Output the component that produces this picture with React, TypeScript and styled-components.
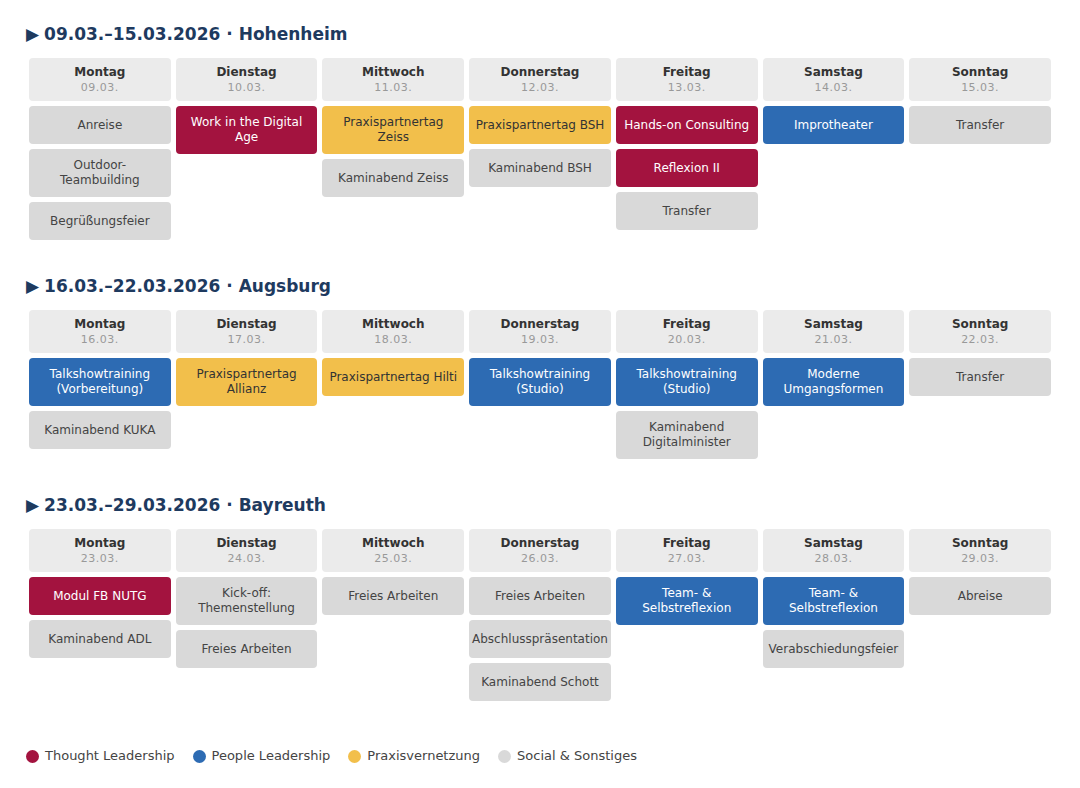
import React from "react";
import styled, { createGlobalStyle } from "styled-components";

type Kind = "thought" | "people" | "praxis" | "social";

const COLORS: Record<Kind, { bg: string; fg: string }> = {
  thought: { bg: "#a3133f", fg: "#ffffff" },
  people: { bg: "#2d6bb3", fg: "#ffffff" },
  praxis: { bg: "#f2bf4b", fg: "#333333" },
  social: { bg: "#d9d9d9", fg: "#444444" },
};

const GlobalStyle = createGlobalStyle`
  html, body { margin: 0; padding: 0; background: #ffffff; }
  body { font-family: "DejaVu Sans", "Liberation Sans", sans-serif; }
  * { box-sizing: border-box; }
`;

const Page = styled.div`
  padding: 23px 26px 20px;
  display: flex;
  flex-direction: column;
`;

const Section = styled.section`
  display: flex;
  flex-direction: column;
  margin-bottom: 32px;
`;

const Heading = styled.h2`
  margin: 0 0 10px;
  font-size: 17px;
  line-height: 22px;
  font-weight: bold;
  color: #1e3a5f;
  display: flex;
  align-items: center;
`;

const Arrow = styled.span`
  font-size: 17px;
  margin-right: 5px;
`;

const Week = styled.div`
  display: grid;
  grid-template-columns: repeat(7, 1fr);
  gap: 5px;
  padding: 3px;
  align-items: start;
`;

const DayColumn = styled.div`
  display: flex;
  flex-direction: column;
  gap: 5px;
  min-width: 0;
`;

const DayHeader = styled.div`
  background: #ebebeb;
  border-radius: 4px;
  padding: 6px 4px;
  text-align: center;
  display: flex;
  flex-direction: column;
`;

const DayName = styled.div`
  font-size: 12px;
  line-height: 16px;
  font-weight: bold;
  color: #333333;
`;

const DayDate = styled.div`
  font-size: 11px;
  line-height: 15px;
  letter-spacing: 0.5px;
  color: #999999;
`;

const Event = styled.div<{ $kind: Kind }>`
  background: ${(p) => COLORS[p.$kind].bg};
  color: ${(p) => COLORS[p.$kind].fg};
  border-radius: 4px;
  min-height: 38px;
  padding: 9px 5.4px;
  font-size: 12px;
  line-height: 15px;
  text-align: center;
  display: flex;
  align-items: center;
  justify-content: center;
`;

const Legend = styled.div`
  display: flex;
  align-items: center;
  gap: 18px;
  margin-top: 12px;
`;

const LegendItem = styled.div`
  display: flex;
  align-items: center;
  gap: 6px;
  font-size: 13px;
  line-height: 16px;
  color: #444444;
`;

const Dot = styled.span<{ $kind: Kind }>`
  width: 13px;
  height: 13px;
  border-radius: 50%;
  background: ${(p) => COLORS[p.$kind].bg};
  display: inline-block;
`;

type Ev = [string, Kind];
type Day = { name: string; date: string; events: Ev[] };
type WeekData = { title: string; days: Day[] };

const NAMES = ["Montag", "Dienstag", "Mittwoch", "Donnerstag", "Freitag", "Samstag", "Sonntag"];

const mk = (dates: string[], events: Ev[][]): Day[] =>
  NAMES.map((name, i) => ({ name, date: dates[i], events: events[i] }));

const WEEKS: WeekData[] = [
  {
    title: "09.03.–15.03.2026 · Hohenheim",
    days: mk(
      ["09.03.", "10.03.", "11.03.", "12.03.", "13.03.", "14.03.", "15.03."],
      [
        [["Anreise", "social"], ["Outdoor-Teambuilding", "social"], ["Begrüßungsfeier", "social"]],
        [["Work in the Digital Age", "thought"]],
        [["Praxispartnertag Zeiss", "praxis"], ["Kaminabend Zeiss", "social"]],
        [["Praxispartnertag BSH", "praxis"], ["Kaminabend BSH", "social"]],
        [["Hands-on Consulting", "thought"], ["Reflexion II", "thought"], ["Transfer", "social"]],
        [["Improtheater", "people"]],
        [["Transfer", "social"]],
      ]
    ),
  },
  {
    title: "16.03.–22.03.2026 · Augsburg",
    days: mk(
      ["16.03.", "17.03.", "18.03.", "19.03.", "20.03.", "21.03.", "22.03."],
      [
        [["Talkshowtraining (Vorbereitung)", "people"], ["Kaminabend KUKA", "social"]],
        [["Praxispartnertag Allianz", "praxis"]],
        [["Praxispartnertag Hilti", "praxis"]],
        [["Talkshowtraining (Studio)", "people"]],
        [["Talkshowtraining (Studio)", "people"], ["Kaminabend Digitalminister", "social"]],
        [["Moderne Umgangsformen", "people"]],
        [["Transfer", "social"]],
      ]
    ),
  },
  {
    title: "23.03.–29.03.2026 · Bayreuth",
    days: mk(
      ["23.03.", "24.03.", "25.03.", "26.03.", "27.03.", "28.03.", "29.03."],
      [
        [["Modul FB NUTG", "thought"], ["Kaminabend ADL", "social"]],
        [["Kick-off: Themenstellung", "social"], ["Freies Arbeiten", "social"]],
        [["Freies Arbeiten", "social"]],
        [["Freies Arbeiten", "social"], ["Abschlusspräsentation", "social"], ["Kaminabend Schott", "social"]],
        [["Team- & Selbstreflexion", "people"]],
        [["Team- & Selbstreflexion", "people"], ["Verabschiedungsfeier", "social"]],
        [["Abreise", "social"]],
      ]
    ),
  },
];

const LEGEND: [string, Kind][] = [
  ["Thought Leadership", "thought"],
  ["People Leadership", "people"],
  ["Praxisvernetzung", "praxis"],
  ["Social & Sonstiges", "social"],
];

export default function App() {
  return (
    <>
      <GlobalStyle />
      <Page>
        {WEEKS.map((w) => (
          <Section key={w.title}>
            <Heading>
              <Arrow>▶</Arrow>
              {w.title}
            </Heading>
            <Week>
              {w.days.map((d) => (
                <DayColumn key={d.name}>
                  <DayHeader>
                    <DayName>{d.name}</DayName>
                    <DayDate>{d.date}</DayDate>
                  </DayHeader>
                  {d.events.map(([label, kind], i) => (
                    <Event key={i} $kind={kind}>
                      {label}
                    </Event>
                  ))}
                </DayColumn>
              ))}
            </Week>
          </Section>
        ))}
        <Legend>
          {LEGEND.map(([label, kind]) => (
            <LegendItem key={kind}>
              <Dot $kind={kind} />
              {label}
            </LegendItem>
          ))}
        </Legend>
      </Page>
    </>
  );
}
